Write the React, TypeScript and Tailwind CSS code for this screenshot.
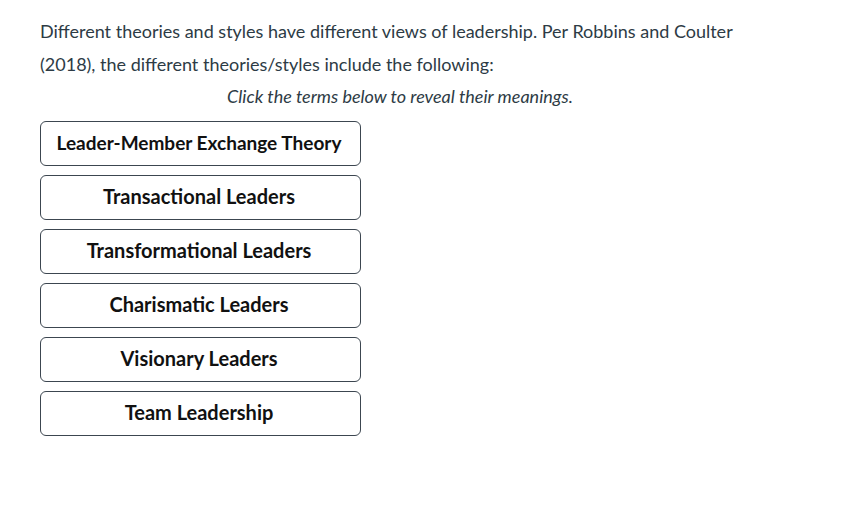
import React from "react";

const terms = [
  "Leader-Member Exchange Theory",
  "Transactional Leaders",
  "Transformational Leaders",
  "Charismatic Leaders",
  "Visionary Leaders",
  "Team Leadership",
];

export default function App() {
  return (
    <div
      className="w-[849px] h-[507px] bg-white pl-[40px] pt-[15px]"
      style={{ fontFamily: "Lato, 'Open Sans', sans-serif" }}
    >
      <div className="w-[720px]">
        <p className="text-[18px] leading-[32.5px] text-[#2d3b45]">
          Different theories and styles have different views of leadership. Per Robbins and Coulter (2018), the different theories/styles include the following:
        </p>
        <p className="text-[18px] leading-[32px] text-[#2d3b45] italic text-center">
          Click the terms below to reveal their meanings.
        </p>
      </div>
      <div className="mt-[9px] flex flex-col gap-[9px] w-[321px]">
        {terms.map((t, i) => (
          <button
            key={t}
            className={
              i === 0
                ? "h-[45px] w-full rounded-[6px] border border-[#3c4650] bg-white text-[19px] font-bold text-[#111] flex items-center justify-center pr-[3px]"
                : "h-[45px] w-full rounded-[6px] border border-[#3c4650] bg-white text-[20px] font-bold text-[#111] flex items-center justify-center pr-[3px] pb-[3px]"
            }
            style={{ fontFamily: "Lato, 'Open Sans', sans-serif" }}
          >
            {t}
          </button>
        ))}
      </div>
    </div>
  );
}
